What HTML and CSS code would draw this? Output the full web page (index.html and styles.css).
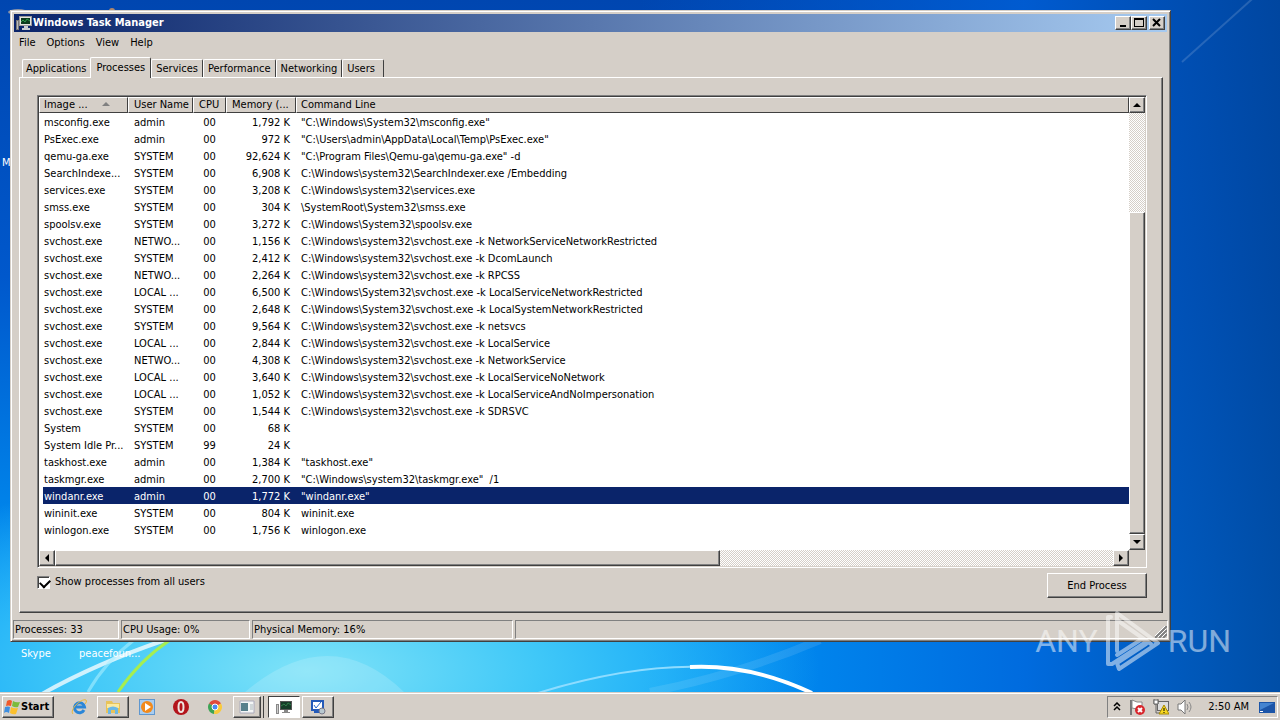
FILE: index.html
```
<!doctype html>
<html lang="en">

<head>
	<meta charset="UTF-8">
	<meta name="viewport" content="width=device-width, initial-scale=1">
	<title>Windows Task Manager</title>
	<link rel="stylesheet" href="styles.css">
</head>

<body>
	<main class="desktop">
		<svg class="wallpaper" viewBox="0 0 1280 692" preserveAspectRatio="none" aria-hidden="true">
			<g fill="none">
				<path d="M1280 -26L1182 62" stroke="#fff" stroke-opacity=".15" stroke-width="2" />
				<path d="M245 692Q330 620 404 692" fill="#fff" fill-opacity=".16" />
				<path d="M42 694Q95 664 165 640" stroke="#fff" stroke-opacity=".75" stroke-width="4" />
				<path d="M88 692Q105 662 134 640" stroke="#a8eeff" stroke-opacity=".6" stroke-width="3" />
				<path d="M118 692Q140 660 170 640" stroke="#a6ee50" stroke-width="3" />
				<path d="M650 692Q740 674 820 640" stroke="#fff" stroke-opacity=".1" stroke-width="8" />
				<path d="M538 693Q630 665 700 667" stroke="#8edcff" stroke-width="2" />
				<path d="M690 667Q750 664 812 693" stroke="#fff" stroke-width="4" />
				<ellipse cx="18" cy="12" rx="10" ry="3" fill="#8a93a8" />
				<circle cx="112" cy="11" r="3" fill="#b0876a" />
			</g>
		</svg>

		<span class="shortcut shortcut-hidden">M</span>
		<a class="shortcut shortcut-skype" href="#">Skype</a>
		<a class="shortcut shortcut-peace" href="#">peacefoun...</a>

		<section class="window">
			<header class="titlebar">
				<svg class="icon" viewBox="0 0 16 16">
					<rect x="3.500" y="1.500" width="12" height="9" fill="#e4e4e0" stroke="#999" />
					<rect x="5" y="3" width="9" height="6" fill="#0b3a1c" />
					<path d="M5 7l2-2 2 2 2-3 3 2" fill="none" stroke="#2f9a4c" />
					<path d="M8 11h4v2h2v2H6v-2h2z" fill="#c8ccd0" />
					<rect x=".5" y="5.500" width="2" height="9" fill="#b8bcc0" stroke="#777" />
				</svg>
				<h1>Windows Task Manager</h1>
				<button class="caption" aria-label="Minimize"><svg viewBox="0 0 12 10"><path d="M3 7h6v2H3z" /></svg></button>
				<button class="caption" aria-label="Maximize"><svg viewBox="0 0 12 10"><path d="M1 0h10v9H1zM2 2v6h8V2z" fill-rule="evenodd" /></svg></button>
				<button class="caption caption-close" aria-label="Close"><svg viewBox="0 0 12 10"><path d="M2 1l7 7M9 1L2 8" stroke="#000" stroke-width="2" /></svg></button>
			</header>

			<nav class="menu">
				<a href="#">File</a>
				<a href="#">Options</a>
				<a href="#">View</a>
				<a href="#">Help</a>
			</nav>

			<div class="tabs" role="tablist">
				<button role="tab">Applications</button>
				<button role="tab" class="active" aria-selected="true">Processes</button>
				<button role="tab">Services</button>
				<button role="tab">Performance</button>
				<button role="tab">Networking</button>
				<button role="tab">Users</button>
			</div>

			<div class="panel">
				<div class="list">
					<div class="list-view">
						<table>
							<colgroup>
								<col class="col-image">
								<col class="col-user">
								<col class="col-cpu">
								<col class="col-memory">
								<col>
							</colgroup>
							<thead>
								<tr>
									<th>Image ...<svg class="sort" viewBox="0 0 8 4"><path d="M4 0l4 4H0z" fill="#808080" /></svg></th>
									<th>User Name</th>
									<th>CPU</th>
									<th>Memory (...</th>
									<th>Command Line</th>
								</tr>
							</thead>
							<tbody>
								<tr><td>msconfig.exe</td><td>admin</td><td>00</td><td>1,792 K</td><td>"C:\Windows\System32\msconfig.exe"</td></tr>
								<tr><td>PsExec.exe</td><td>admin</td><td>00</td><td>972 K</td><td>"C:\Users\admin\AppData\Local\Temp\PsExec.exe"</td></tr>
								<tr><td>qemu-ga.exe</td><td>SYSTEM</td><td>00</td><td>92,624 K</td><td>"C:\Program Files\Qemu-ga\qemu-ga.exe" -d</td></tr>
								<tr><td>SearchIndexe...</td><td>SYSTEM</td><td>00</td><td>6,908 K</td><td>C:\Windows\system32\SearchIndexer.exe /Embedding</td></tr>
								<tr><td>services.exe</td><td>SYSTEM</td><td>00</td><td>3,208 K</td><td>C:\Windows\system32\services.exe</td></tr>
								<tr><td>smss.exe</td><td>SYSTEM</td><td>00</td><td>304 K</td><td>\SystemRoot\System32\smss.exe</td></tr>
								<tr><td>spoolsv.exe</td><td>SYSTEM</td><td>00</td><td>3,272 K</td><td>C:\Windows\System32\spoolsv.exe</td></tr>
								<tr><td>svchost.exe</td><td>NETWO...</td><td>00</td><td>1,156 K</td><td>C:\Windows\system32\svchost.exe -k NetworkServiceNetworkRestricted</td></tr>
								<tr><td>svchost.exe</td><td>SYSTEM</td><td>00</td><td>2,412 K</td><td>C:\Windows\system32\svchost.exe -k DcomLaunch</td></tr>
								<tr><td>svchost.exe</td><td>NETWO...</td><td>00</td><td>2,264 K</td><td>C:\Windows\system32\svchost.exe -k RPCSS</td></tr>
								<tr><td>svchost.exe</td><td>LOCAL ...</td><td>00</td><td>6,500 K</td><td>C:\Windows\System32\svchost.exe -k LocalServiceNetworkRestricted</td></tr>
								<tr><td>svchost.exe</td><td>SYSTEM</td><td>00</td><td>2,648 K</td><td>C:\Windows\System32\svchost.exe -k LocalSystemNetworkRestricted</td></tr>
								<tr><td>svchost.exe</td><td>SYSTEM</td><td>00</td><td>9,564 K</td><td>C:\Windows\system32\svchost.exe -k netsvcs</td></tr>
								<tr><td>svchost.exe</td><td>LOCAL ...</td><td>00</td><td>2,844 K</td><td>C:\Windows\system32\svchost.exe -k LocalService</td></tr>
								<tr><td>svchost.exe</td><td>NETWO...</td><td>00</td><td>4,308 K</td><td>C:\Windows\system32\svchost.exe -k NetworkService</td></tr>
								<tr><td>svchost.exe</td><td>LOCAL ...</td><td>00</td><td>3,640 K</td><td>C:\Windows\system32\svchost.exe -k LocalServiceNoNetwork</td></tr>
								<tr><td>svchost.exe</td><td>LOCAL ...</td><td>00</td><td>1,052 K</td><td>C:\Windows\system32\svchost.exe -k LocalServiceAndNoImpersonation</td></tr>
								<tr><td>svchost.exe</td><td>SYSTEM</td><td>00</td><td>1,544 K</td><td>C:\Windows\system32\svchost.exe -k SDRSVC</td></tr>
								<tr><td>System</td><td>SYSTEM</td><td>00</td><td>68 K</td><td></td></tr>
								<tr><td>System Idle Pr...</td><td>SYSTEM</td><td>99</td><td>24 K</td><td></td></tr>
								<tr><td>taskhost.exe</td><td>admin</td><td>00</td><td>1,384 K</td><td>"taskhost.exe"</td></tr>
								<tr><td>taskmgr.exe</td><td>admin</td><td>00</td><td>2,700 K</td><td>"C:\Windows\system32\taskmgr.exe"&nbsp; /1</td></tr>
								<tr class="selected"><td>windanr.exe</td><td>admin</td><td>00</td><td>1,772 K</td><td>"windanr.exe"</td></tr>
								<tr><td>wininit.exe</td><td>SYSTEM</td><td>00</td><td>804 K</td><td>wininit.exe</td></tr>
								<tr><td>winlogon.exe</td><td>SYSTEM</td><td>00</td><td>1,756 K</td><td>winlogon.exe</td></tr>
							</tbody>
						</table>
					</div>
					<div class="scroll scroll-y">
						<button aria-label="Scroll up"><svg viewBox="0 0 8 8"><path d="M4 2l4 4H0z" /></svg></button>
						<div class="thumb"></div>
						<button aria-label="Scroll down"><svg viewBox="0 0 8 8"><path d="M4 6L0 2h8z" /></svg></button>
					</div>
					<div class="scroll scroll-x">
						<button aria-label="Scroll left"><svg viewBox="0 0 8 8"><path d="M2 4l4-4v8z" /></svg></button>
						<div class="thumb"></div>
						<button aria-label="Scroll right"><svg viewBox="0 0 8 8"><path d="M6 4L2 0v8z" /></svg></button>
					</div>
				</div>
				<div class="actions">
					<label><input type="checkbox" checked>Show processes from all users</label>
					<button class="end">End Process</button>
				</div>
			</div>

			<footer class="status">
				<span class="status-processes">Processes: 33</span>
				<span class="status-cpu">CPU Usage: 0%</span>
				<span class="status-memory">Physical Memory: 16%</span>
				<span class="status-rest"><svg class="grip" viewBox="0 0 12 12"><path d="M0 12L12 0M4 12l8-8M8 12l4-4" stroke="#808080" stroke-width="2" /><path d="M-1 11L11-1M3 11l8-8M7 11l4-4" stroke="#fff" /></svg></span>
			</footer>
		</section>

		<div class="watermark">
			<span>ANY</span>
			<svg viewBox="0 0 56 62" fill="none" stroke="#fff" stroke-width="4" stroke-linejoin="round" stroke-linecap="round">
				<path d="M12 41V3l41 30-39 26-2-6 29-19" />
				<path d="M12 10l34 24" />
				<path d="M6 7H3v47h4l34-22-4-3L12 45" />
			</svg>
			<span>RUN</span>
		</div>
	</main>

	<footer class="taskbar">
		<button class="start">
			<svg class="icon" viewBox="0 0 16 16">
				<path d="M3 2q3-2 5 0L7 7q-3-1-5 0z" fill="#f0592a" />
				<path d="M9 2q3 2 7 1l-2 5q-3 1-6-1z" fill="#7cbb3c" />
				<path d="M1 8q3-1 5 0l-1 6q-3-2-5 0z" fill="#3f8fe0" />
				<path d="M7 8q3 2 7 1l-2 6q-3 1-6-1z" fill="#fbc02d" />
			</svg>
			Start
		</button>
		<div class="apps">
			<button aria-label="Internet Explorer"><svg class="icon" viewBox="0 0 16 16">
				<path d="M13 11a5 5 0 1 1 .5-3H5" fill="none" stroke="#2a86d8" stroke-width="3" />
				<path d="M2 15C-2 11 10-1 15 1c1 1 0 3-1 4" fill="none" stroke="#e9b73a" stroke-width="1" />
			</svg></button>
			<button class="raised" aria-label="Explorer"><svg class="icon" viewBox="0 0 16 16">
				<path d="M1 2h6l1 2h7v10H1z" fill="#e8c35a" />
				<path d="M2 5h12v4H2z" fill="#fbeaa0" />
				<path d="M3 15V9q5-3 10 0v6h-3v-4H6v4z" fill="#6cb8e6" />
			</svg></button>
			<button aria-label="Media Player"><svg class="icon" viewBox="0 0 16 16">
				<rect x=".5" y=".5" width="15" height="15" fill="#a9cdf0" stroke="#5f97cf" />
				<circle cx="8" cy="8" r="6" fill="#f28a1c" />
				<path d="M6 4l6 4-6 4z" fill="#fff" />
			</svg></button>
			<button aria-label="Opera"><svg class="icon" viewBox="0 0 16 16">
				<circle cx="8" cy="8" r="8" fill="#b3141b" />
				<ellipse cx="8" cy="8" rx="2.500" ry="5" fill="#b3141b" stroke="#eee4e0" stroke-width="2" />
			</svg></button>
			<button aria-label="Chrome"><svg class="icon" viewBox="0 0 16 16">
				<path d="M8 8L2 4.500A7 7 0 0 1 14 4.500z" fill="#e04a3c" />
				<path d="M8 8L2 4.500A7 7 0 0 0 7 15z" fill="#3da455" />
				<path d="M8 8l6-3.500A7 7 0 0 1 7 15z" fill="#f9ca3c" />
				<circle cx="8" cy="8" r="3" fill="#4a8af4" stroke="#fff" />
			</svg></button>
			<button class="raised stacked" aria-label="Console"><svg class="icon" viewBox="0 0 16 16">
				<path d="M1 2h14v12H1z" fill="#f4f6f6" stroke="#aab" />
				<path d="M2 4h7v8H2z" fill="#58808c" />
				<path d="M11 5h3v6h-3z" fill="#cfd6d8" />
			</svg></button>
			<button class="pressed" aria-label="Task Manager"><svg class="icon" viewBox="0 0 16 16">
				<rect x="4.500" y="2.500" width="11" height="8" fill="#153c28" stroke="#555" />
				<path d="M5 7l3-2 2 2 2-3 3 2" fill="none" stroke="#2f7a48" />
				<path d="M8 11h4v2h2v1H6v-1h2z" fill="#888" />
				<rect x=".5" y="5.500" width="2" height="9" fill="#ccc" stroke="#888" />
			</svg></button>
			<button class="raised" aria-label="System Configuration"><svg class="icon" viewBox="0 0 16 16">
				<rect x="2" y="2" width="11" height="9" fill="#fff" stroke="#245ab8" stroke-width="2" />
				<path d="M4 6l2 3 5-6" fill="none" stroke="#2a66c8" />
				<path d="M4 13h6" stroke="#245ab8" stroke-width="2" />
				<circle cx="12" cy="12" r="3" fill="#b8c8d0" stroke="#778" />
			</svg></button>
		</div>
		<div class="tray">
			<svg class="chevrons" viewBox="0 0 8 10"><path d="M1 4l3-3 3 3M1 8l3-3 3 3" fill="none" stroke="#000" stroke-width="1.500" /></svg>
			<svg class="icon" viewBox="0 0 16 16">
				<path d="M2 16V1" stroke="#777" stroke-width="2" />
				<path d="M3 1l5 2h5v7H8L3 9z" fill="#fff" stroke="#888" />
				<circle cx="11" cy="11" r="5" fill="#d8262c" />
				<path d="M9 9l4 4M13 9l-4 4" stroke="#fff" stroke-width="2" />
			</svg>
			<svg class="icon" viewBox="0 0 16 16">
				<rect x="4.500" y="2.500" width="11" height="9" fill="#ddd" stroke="#666" />
				<path d="M1 0v5h4V0M3 5v9h4" fill="none" stroke="#666" />
				<path d="M1 1h4v4H1z" fill="#fff" stroke="#666" />
				<path d="M11 6l5 9H6z" fill="#f8d820" stroke="#a88a00" />
				<path d="M11 9v3M11 13v1" stroke="#000" />
			</svg>
			<svg class="icon" viewBox="0 0 16 16">
				<path d="M1 5h3l4-4v14l-4-4H1z" fill="#fff" stroke="#777" />
				<path d="M10 5q2 3 0 6M12 3q4 5 0 10" fill="none" stroke="#888" />
			</svg>
			<time>2:50 AM</time>
			<svg class="icon" viewBox="0 0 16 16">
				<path d="M0 3h16v11H0z" fill="#1c55a8" />
				<path d="M1 4h14L1 11z" fill="#4584d0" />
				<path d="M1 12h3v1H1z" fill="#fff" />
			</svg>
		</div>
	</footer>
</body>

</html>
```
FILE: styles.css
```
* {
	box-sizing: border-box;
}

body {
	margin: 0;
	min-height: 100vh;
	display: flex;
	flex-direction: column;
	font: 11px/14px "DejaVu Sans Condensed", "DejaVu Sans", sans-serif;
	color: #000;
}

button {
	font: inherit;
	color: inherit;
	padding: 0;
	border: none;
	background: #d5cfc8;
}

a {
	color: inherit;
	text-decoration: none;
}

svg {
	display: block;
}

.icon {
	width: 16px;
	height: 16px;
	flex: none;
}

/* desktop */

.desktop {
	position: relative;
	flex: 1;
	min-height: 650px;
	overflow: hidden;
	background:
		radial-gradient(ellipse 40% 30% at 24% 97%, #7fe3f8 0%, #40c8f8 45%, transparent 100%),
		linear-gradient(90deg, transparent 50%, rgba(0, 96, 216, .8) 80%, rgba(0, 70, 158, .9) 100%),
		linear-gradient(180deg, #0046b0 0%, #0058cc 40%, #0098f8 90%);
}

.wallpaper {
	position: absolute;
	width: 100%;
	height: 100%;
}

.shortcut {
	position: absolute;
	color: #fff;
}

.shortcut-hidden {
	left: 2px;
	top: 156px;
}

.shortcut-skype {
	left: 21px;
	top: 647px;
}

.shortcut-peace {
	left: 79px;
	top: 647px;
}

/* window */

.window {
	position: absolute;
	left: 10px;
	right: 109px;
	top: 10px;
	padding: 2px;
	background: #d5cfc8;
	border: 1px solid;
	border-color: #d5cfc8 #404040 #404040 #d5cfc8;
	box-shadow: inset 1px 1px #fff, inset -1px -1px #808080;
}

.titlebar {
	display: flex;
	align-items: center;
	height: 18px;
	margin: 1px;
	padding: 0 2px;
	color: #fff;
	background: linear-gradient(90deg, #0a246a, #a6caf0);
}

.titlebar h1 {
	flex: 1;
	margin: 0 0 0 1px;
	font-size: 11px;
}

.caption {
	width: 16px;
	height: 14px;
	padding: 1px;
}

.caption-close {
	margin-left: 2px;
}

.caption svg {
	width: 12px;
	height: 10px;
}

.caption,
.scroll button,
.thumb,
.end,
.start,
.raised {
	background: #d5cfc8;
	border: 1px solid;
	border-color: #fff #404040 #404040 #fff;
	box-shadow: inset -1px -1px #808080;
}

.menu {
	display: flex;
	gap: 11px;
	padding: 3px 6px 2px;
	height: 19px;
}

.tabs {
	display: flex;
	align-items: flex-end;
	height: 25px;
	padding-left: 9px;
}

.tabs button {
	height: 18px;
	padding: 1px 4px 0;
	border: solid;
	border-width: 1px 1px 0;
	border-color: #fff #404040 #fff #fff;
	border-radius: 2px 2px 0 0;
}

.tabs button:first-child {
	padding: 1px 3px 0;
	border-right-color: #d5cfc8;
}

.tabs button:last-child {
	padding-right: 8px;
}

.tabs .active {
	position: relative;
	height: 21px;
	margin-bottom: -1px;
	padding: 0 5px 1px;
}

.panel {
	margin: 0 5px 0 6px;
	padding: 17px 15px 14px 17px;
	border: 1px solid;
	border-color: #fff #404040 #404040 #fff;
	box-shadow: inset -1px -1px #808080;
}

/* process list */

.list {
	display: grid;
	grid-template-columns: 1fr 16px;
	grid-template-rows: 1fr 16px;
	border: 1px solid;
	border-color: #808080 #fff #fff #808080;
	padding: 1px;
	background: #d5cfc8;
	box-shadow: inset 1px 1px #404040;
}

.list-view {
	min-width: 0;
	padding-bottom: 12px;
	background: #fff;
	overflow: hidden;
}

table {
	width: 100%;
	table-layout: fixed;
	border-spacing: 0;
}

.col-image {
	width: 89px;
}

.col-user {
	width: 65px;
}

.col-cpu {
	width: 33px;
}

.col-memory {
	width: 70px;
}

th {
	height: 16px;
	padding: 0 5px;
	font-weight: normal;
	text-align: left;
	white-space: nowrap;
	background: #d5cfc8;
	border: 1px solid;
	border-color: #fff #404040 #404040 #fff;
}

.sort {
	display: inline-block;
	width: 8px;
	height: 4px;
	margin: 0 0 2px 14px;
}

td {
	height: 17px;
	padding: 3px 6px 0;
	white-space: nowrap;
	overflow: hidden;
}

th:first-child {
	padding-left: 4px;
}

td:first-child {
	padding-left: 1px;
	padding-right: 0;
	border-left: 4px solid #fff;
}

td:nth-child(2) {
	padding-right: 0;
}

td:nth-child(3) {
	text-align: center;
}

td:nth-child(4) {
	text-align: right;
}

td:last-child {
	padding-left: 5px;
}

th:last-child {
	padding-left: 4px;
}

.selected {
	color: #fff;
	background: #0a246a;
}

.scroll {
	display: flex;
	background: repeating-conic-gradient(#fff 0 25%, #d5cfc8 0 50%) 0 0 / 2px 2px;
}

.scroll-y {
	flex-direction: column;
}

.scroll button {
	flex: none;
	display: grid;
	place-items: center;
	width: 16px;
	height: 16px;
}

.scroll svg {
	width: 8px;
	height: 8px;
}

.scroll-y .thumb {
	flex: none;
	height: 71%;
	margin-top: auto;
}

.scroll-x .thumb {
	width: 61%;
	margin-right: auto;
}

.actions {
	display: flex;
	justify-content: space-between;
	margin-top: 5px;
}

.actions label {
	display: flex;
	align-items: center;
	gap: 5px;
	height: 18px;
}

input[type="checkbox"] {
	appearance: none;
	width: 13px;
	height: 13px;
	margin: 0;
	background: #fff;
	border: 1px solid;
	border-color: #808080 #fff #fff #808080;
	box-shadow: inset 1px 1px #404040;
}

input[type="checkbox"]:checked::after {
	content: "";
	display: block;
	width: 8px;
	height: 5px;
	margin: 2px 0 0 2px;
	border: solid #000;
	border-width: 0 0 2px 2px;
	transform: rotate(-45deg);
}

.end {
	width: 100px;
	height: 25px;
}

.status {
	display: flex;
	gap: 2px;
	margin-top: 7px;
}

.status span {
	height: 19px;
	padding: 2px 1px;
	border: 1px solid;
	border-color: #808080 #fff #fff #808080;
}

.status-processes {
	width: 106px;
}

.status-cpu {
	width: 129px;
}

.status-memory {
	width: 261px;
}

.status .status-rest {
	display: flex;
	flex: 1;
	justify-content: flex-end;
	align-items: flex-end;
	padding: 0;
}

.grip {
	width: 12px;
	height: 12px;
}

.watermark {
	position: absolute;
	right: 49px;
	bottom: 20px;
	display: flex;
	align-items: center;
	gap: 7px;
	opacity: .5;
	color: #fff;
	font: 32px/62px Roboto, sans-serif;
}

.watermark svg {
	width: 56px;
	height: 62px;
}

/* taskbar */

.taskbar {
	position: relative;
	display: flex;
	align-items: center;
	height: 28px;
	padding: 2px;
	background: #d5cfc8;
	border-top: 1px solid #d5cfc8;
	box-shadow: inset 0 1px #fff;
}

.start {
	display: flex;
	align-items: center;
	gap: 1px;
	width: 52px;
	height: 22px;
	padding: 0 1px;
	font-weight: bold;
}

.apps {
	display: flex;
	flex: 1;
	gap: 2px;
	margin-left: 9px;
}

.apps button {
	display: grid;
	place-items: center;
	width: 32px;
	height: 22px;
}

.apps .stacked {
	width: 28px;
	margin-right: 5px;
	box-shadow: inset -1px -1px #808080, 2px 0 #d5cfc8, 3px 0 #404040;
}

.apps .pressed {
	background: #fff;
	border: 1px solid;
	border-color: #404040 #fff #fff #404040;
}

.tray {
	display: flex;
	align-items: center;
	gap: 8px;
	height: 22px;
	padding: 0 2px 0 5px;
	border: 1px solid;
	border-color: #808080 #fff #fff #808080;
}

.tray time {
	margin: 0 2px 0 7px;
}

.chevrons {
	width: 8px;
	height: 10px;
}
```
